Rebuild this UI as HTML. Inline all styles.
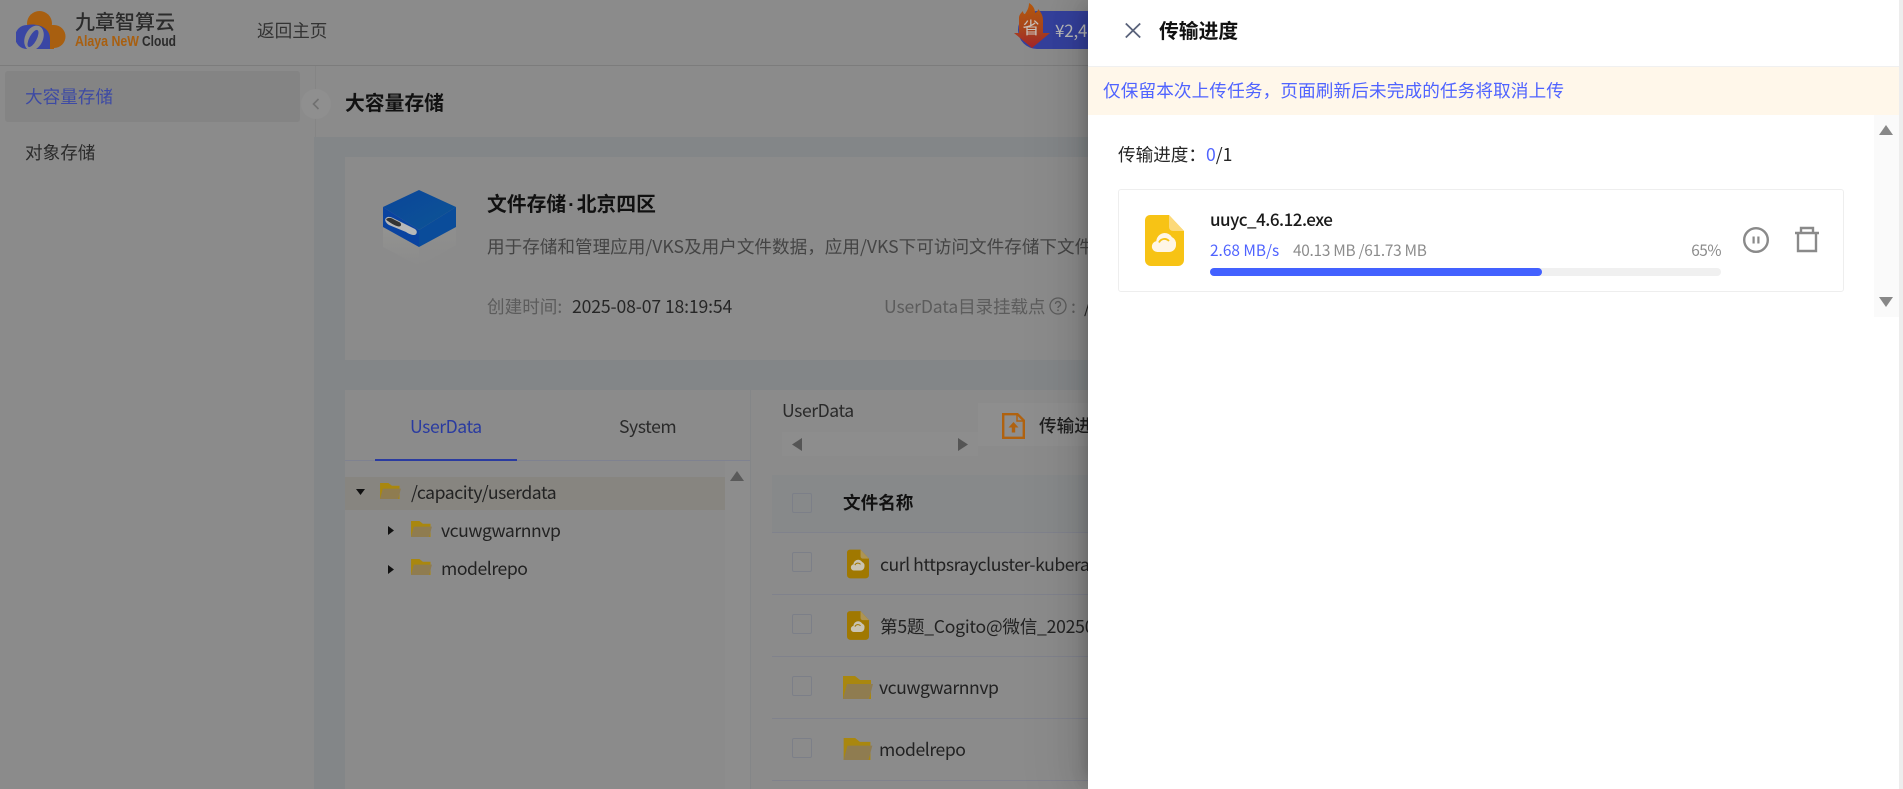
<!DOCTYPE html>
<html lang="zh">
<head>
<meta charset="utf-8">
<title>传输进度</title>
<style>
html,body{margin:0;padding:0;width:1903px;height:789px;overflow:hidden;background:#8b8b8b}
body{position:relative;font-family:"Noto Sans CJK SC","Liberation Sans",sans-serif;color:#262626}
.a{position:absolute}
.t{position:absolute;white-space:nowrap;font-size:17.6px;line-height:24px;height:24px}
.l{letter-spacing:-.45px}
.b{font-weight:700}
.cb{position:absolute;left:792px;width:18px;height:18px;border:1px solid #7c7f88;border-radius:2px;background:#8b8b8b}
.ln{position:absolute;height:1px}
svg{position:absolute;display:block;overflow:visible}
#panel{position:absolute;left:1088px;top:0;width:815px;height:789px;background:#fff;box-shadow:-6px 0 16px -8px rgba(0,0,0,.25),-9px 0 28px 0 rgba(0,0,0,.1),-12px 0 48px 16px rgba(0,0,0,.05);overflow:hidden}
</style>
</head>
<body>
<!-- header -->
<div class="ln" style="left:0;top:65px;width:1088px;background:#7c7c7c"></div>
<svg style="left:16px;top:11px;overflow:hidden" width="52" height="38" viewBox="0 0 52 38">
  <circle cx="23.500" cy="12.500" r="12.500" fill="#a85f10"/>
  <circle cx="38" cy="25.500" r="11.500" fill="#a85f10"/>
  <path d="M12 14h26v24H12z" fill="#a85f10"/>
  <circle cx="11" cy="26" r="12" fill="#3a46a4"/>
  <path d="M11 14c10-2 23 2 23 14v10H11z" fill="#3a46a4"/>
  <ellipse cx="18" cy="27" rx="9" ry="13" transform="rotate(24 18 27)" fill="#8b8b8b"/>
  <ellipse cx="17" cy="27.500" rx="3.600" ry="9.500" transform="rotate(28 17 27.500)" fill="#3a46a4"/>
</svg>
<div class="t" style="left:75px;top:9px;font-size:20px;font-weight:500;color:#2b2b2b;letter-spacing:0">九章智算云</div>
<svg style="left:75px;top:32px" width="101" height="18" viewBox="0 0 101 18">
  <text x="0" y="14" font-family="Liberation Sans" font-weight="700" font-size="15" fill="#a85f10" textLength="64" lengthAdjust="spacingAndGlyphs">Alaya NeW</text>
  <text x="67" y="14" font-family="Liberation Sans" font-weight="700" font-size="15" fill="#2b2b2b" textLength="34" lengthAdjust="spacingAndGlyphs">Cloud</text>
</svg>
<div class="t" style="left:257px;top:19px;color:#333">返回主页</div>

<!-- badge -->
<div class="a" style="left:1018px;top:11px;width:90px;height:38px;border-radius:19px 0 0 19px;background:#34409c"></div>
<div class="t" style="left:1055px;top:18px;color:#b9b9b9;font-size:17px;letter-spacing:-.2px">¥2,4</div>
<svg style="left:1014px;top:3px" width="36" height="46" viewBox="0 0 36 46">
  <defs><linearGradient id="fl" x1="0" y1="0" x2="0" y2="1"><stop offset="0" stop-color="#b5590c"/><stop offset=".55" stop-color="#a8461c"/><stop offset="1" stop-color="#a32529"/></linearGradient></defs>
  <path d="M15 0c5 3 6 7 6 10 2-1 3-2 3-4 3 3 5 7 5 11v13h7L18 45 0 30h5V15c0-3 2-5 4-7 0 2 1 3 2 3 2-3 4-6 4-11z" fill="url(#fl)"/>
  <text x="17" y="31" text-anchor="middle" font-family="Noto Sans CJK SC" font-size="17" fill="#c9c2bc">省</text>
</svg>

<!-- sidebar -->
<div class="a" style="left:315px;top:66px;width:1px;height:71px;background:#858585"></div>
<div class="a" style="left:5px;top:71px;width:295px;height:51px;background:#848484;border-radius:3px"></div>
<div class="t" style="left:25px;top:85px;color:#3d4aa4">大容量存储</div>
<div class="t" style="left:25px;top:141px;color:#2a2a2a">对象存储</div>
<div class="a" style="left:301px;top:89px;width:30px;height:30px;border-radius:50%;background:#8f8f8f"></div>
<svg style="left:312px;top:98px" width="8" height="12" viewBox="0 0 8 12"><path d="M6.500 1 1.500 6l5 5" fill="none" stroke="#707070" stroke-width="1.600"/></svg>

<!-- page title -->
<div class="t b" style="left:345px;top:90px;font-size:19.8px;color:#111">大容量存储</div>

<!-- band -->
<div class="a" style="left:314px;top:137px;width:774px;height:652px;background:#838688"></div>
<div class="a" style="left:345px;top:157px;width:743px;height:203px;background:#8b8b8b"></div>
<div class="a" style="left:345px;top:390px;width:743px;height:399px;background:#8b8b8b"></div>

<!-- storage box -->
<svg style="left:383px;top:190px" width="73" height="76" viewBox="0 0 73 76">
  <defs>
    <linearGradient id="g1" x1="0" y1="0" x2="1" y2="1"><stop offset="0" stop-color="#0a459a"/><stop offset="1" stop-color="#0d5595"/></linearGradient>
    <linearGradient id="g2" x1="0" y1="0" x2="0" y2="1"><stop offset="0" stop-color="#939391"/><stop offset="1" stop-color="#8b8b8b"/></linearGradient>
    <linearGradient id="g3" x1="0" y1="0" x2="0" y2="1"><stop offset="0" stop-color="#8f8f8e"/><stop offset="1" stop-color="#8b8b8b"/></linearGradient>
  </defs>
  <path d="M0 35v22l36 19V55z" fill="url(#g2)"/>
  <path d="M73 35v20L36 76V55z" fill="url(#g3)"/>
  <path d="M36 0 73 17 36 40 0 17z" fill="url(#g1)"/>
  <path d="M0 17 36 40V57L0 37z" fill="#0a43a0"/>
  <path d="M73 17 36 40V57L73 37z" fill="#0a4c9a"/>
  <path d="M3 28c2-2 5-1 7 0l22 11c3 2 2 6-1 6-2 0-5-1-8-3L6 35c-3-2-5-5-3-7z" fill="#b8b8b8"/>
  <path d="M4 28.500c2-1 4-1 7 1l6 3c2 2 1 4-1 4-2 0-6-2-9-4-3-2-5-3-3-4z" fill="#333"/>
</svg>

<div class="t b" style="left:487px;top:191px;font-size:19.8px;color:#111">文件存储<span style="font-family:'Liberation Sans';margin:0 2px">·</span>北京四区</div>
<div class="t" style="left:487px;top:235px;color:#444">用于存储和管理应用/VKS及用户文件数据，应用/VKS下可访问文件存储下文件</div>
<div class="t" style="left:487px;top:295px;color:#5c5c5c">创建时间:</div>
<div class="t" style="left:572px;top:295px;color:#262626;letter-spacing:-.13px">2025-08-07 18:19:54</div>
<div class="t" style="left:884px;top:295px;color:#5c5c5c;letter-spacing:-.15px">UserData目录挂载点</div>
<svg style="left:1049px;top:297px" width="18" height="18" viewBox="0 0 18 18">
  <circle cx="9" cy="9" r="8" fill="none" stroke="#5c5c5c" stroke-width="1.300"/>
  <path d="M6.500 7a2.500 2.500 0 1 1 3.600 2.300c-.8.400-1.100.8-1.100 1.700" fill="none" stroke="#5c5c5c" stroke-width="1.300"/>
  <circle cx="9" cy="13.300" r=".9" fill="#5c5c5c"/>
</svg>
<div class="t" style="left:1071px;top:295px;color:#5c5c5c">:</div>
<div class="t" style="left:1084px;top:295px;color:#262626">/</div>

<!-- tabs / tree -->
<div class="a" style="left:750px;top:390px;width:1px;height:399px;background:#848688"></div>
<div class="t l" style="left:410px;top:415px;color:#2a3ba0">UserData</div>
<div class="t l" style="left:619px;top:415px;color:#2a2a2a">System</div>
<div class="ln" style="left:345px;top:460px;width:405px;background:#7f8290"></div>
<div class="a" style="left:375px;top:459px;width:142px;height:2px;background:#2a3ba0"></div>
<div class="a" style="left:725px;top:461px;width:25px;height:328px;background:#8d8d8d"></div>
<div class="a" style="left:345px;top:477px;width:380px;height:33px;background:#878580"></div>
<svg style="left:730px;top:471px" width="14" height="10" viewBox="0 0 14 10"><path d="M7 0 14 10H0z" fill="#5a5a5a"/></svg>

<svg style="left:356px;top:489px" width="9" height="6" viewBox="0 0 9 6"><path d="M0 0h9L4.500 6z" fill="#111"/></svg>
<svg style="left:380px;top:483px" width="21" height="16" viewBox="0 0 30 23"><path d="M0 0h12l5 4h11v19H0z" fill="#a9870f"/><path d="M4 8h26l-4 15H0z" fill="#8f7c50"/></svg>
<div class="t l" style="left:411px;top:481px;color:#222">/capacity/userdata</div>

<svg style="left:388px;top:526px" width="6" height="9" viewBox="0 0 6 9"><path d="M0 0l6 4.500L0 9z" fill="#111"/></svg>
<svg style="left:411px;top:521px" width="21" height="16" viewBox="0 0 30 23"><path d="M0 0h12l5 4h11v19H0z" fill="#a9870f"/><path d="M4 8h26l-4 15H0z" fill="#8f7c50"/></svg>
<div class="t l" style="left:441px;top:519px;color:#222">vcuwgwarnnvp</div>

<svg style="left:388px;top:565px" width="6" height="9" viewBox="0 0 6 9"><path d="M0 0l6 4.500L0 9z" fill="#111"/></svg>
<svg style="left:411px;top:559px" width="21" height="16" viewBox="0 0 30 23"><path d="M0 0h12l5 4h11v19H0z" fill="#a9870f"/><path d="M4 8h26l-4 15H0z" fill="#8f7c50"/></svg>
<div class="t l" style="left:441px;top:557px;color:#222">modelrepo</div>

<!-- right column -->
<div class="t l" style="left:782px;top:399px;color:#2a2a2a">UserData</div>
<div class="a" style="left:782px;top:432px;width:196px;height:24px;background:#8d8d8d"></div>
<svg style="left:792px;top:438px" width="10" height="13" viewBox="0 0 10 13"><path d="M10 0v13L0 6.500z" fill="#555"/></svg>
<svg style="left:958px;top:438px" width="10" height="13" viewBox="0 0 10 13"><path d="M0 0v13l10-6.500z" fill="#555"/></svg>
<div class="a" style="left:978px;top:403px;width:110px;height:43px;background:#8e8e8e"></div>
<svg style="left:1002px;top:413px" width="23" height="26" viewBox="0 0 23 26">
  <path d="M1.200 1.200h14.300l6.300 6.300v17.300H1.200z" fill="none" stroke="#b0620f" stroke-width="2.400"/>
  <path d="M15 1v7h7" fill="none" stroke="#b0620f" stroke-width="1.500"/>
  <path d="M11.500 9 16.500 14.500h-3.300v5h-3.400v-5H6.500z" fill="#b0620f"/>
</svg>
<div class="t" style="left:1039px;top:414px;font-weight:500;color:#1e1e1e">传输进度</div>

<div class="a" style="left:772px;top:475px;width:316px;height:57px;background:#87898a"></div>
<div class="ln" style="left:772px;top:532px;width:316px;background:#80828c"></div>
<div class="ln" style="left:772px;top:594px;width:316px;background:#80828c"></div>
<div class="ln" style="left:772px;top:656px;width:316px;background:#80828c"></div>
<div class="ln" style="left:772px;top:718px;width:316px;background:#80828c"></div>
<div class="ln" style="left:772px;top:780px;width:316px;background:#80828c"></div>
<div class="cb" style="top:493px;background:#87898a"></div>
<div class="cb" style="top:552px"></div>
<div class="cb" style="top:614px"></div>
<div class="cb" style="top:676px"></div>
<div class="cb" style="top:738px"></div>
<div class="t b" style="left:843px;top:491px;color:#111">文件名称</div>

<svg style="left:847px;top:549px" width="22" height="30" viewBox="0 0 39 51">
  <path d="M5 0H24L39 16V45a6 6 0 0 1-6 6H6a6 6 0 0 1-6-6V5a5 5 0 0 1 5-5z" fill="#a07800"/>
  <path d="M24 0 39 16H28a4 4 0 0 1-4-4z" fill="#ad9454"/>
  <path d="M12.500 37a5.500 5.500 0 0 1-1.200-10.900A8.700 8.700 0 0 1 19.500 18a8.700 8.700 0 0 1 7.300 4A7.600 7.600 0 0 1 31 30a7 7 0 0 1-7 7z" fill="#c9c3b2"/>
  <path d="M14 27.500a6 6 0 0 1 10-1.500" stroke="#a07800" stroke-width="1.800" fill="none"/>
</svg>
<div class="t l" style="left:880px;top:553px;color:#222">curl httpsraycluster-kuberay</div>
<svg style="left:847px;top:610px" width="22" height="31" viewBox="0 0 39 51">
  <path d="M5 0H24L39 16V45a6 6 0 0 1-6 6H6a6 6 0 0 1-6-6V5a5 5 0 0 1 5-5z" fill="#a07800"/>
  <path d="M24 0 39 16H28a4 4 0 0 1-4-4z" fill="#ad9454"/>
  <path d="M12.500 37a5.500 5.500 0 0 1-1.200-10.900A8.700 8.700 0 0 1 19.500 18a8.700 8.700 0 0 1 7.300 4A7.600 7.600 0 0 1 31 30a7 7 0 0 1-7 7z" fill="#c9c3b2"/>
  <path d="M14 27.500a6 6 0 0 1 10-1.500" stroke="#a07800" stroke-width="1.800" fill="none"/>
</svg>
<div class="t" style="left:880px;top:615px;color:#222;letter-spacing:-.25px">第5题_Cogito@微信_20250</div>
<svg style="left:843px;top:676px" width="30" height="23" viewBox="0 0 30 23"><path d="M0 0h12l5 4h11v19H0z" fill="#a9870f"/><path d="M4 8h26l-4 15H0z" fill="#8f7c50"/></svg>
<div class="t l" style="left:879px;top:676px;color:#222">vcuwgwarnnvp</div>
<svg style="left:843px;top:738px" width="30" height="22" viewBox="0 0 30 23"><path d="M0 0h12l5 4h11v19H0z" fill="#a9870f"/><path d="M4 8h26l-4 15H0z" fill="#8f7c50"/></svg>
<div class="t l" style="left:879px;top:738px;color:#222">modelrepo</div>

<!-- drawer panel -->
<div id="panel">
  <svg style="left:37px;top:23px" width="16" height="15" viewBox="0 0 16 15"><path d="M.8.500 15.200 14.500M15.200.500.800 14.500" stroke="#59627a" stroke-width="1.800" fill="none"/></svg>
  <div class="t b" style="left:71px;top:18px;font-size:19.8px;color:#111">传输进度</div>
  <div class="ln" style="left:0;top:66px;width:811px;background:#f0f0f0"></div>
  <div class="a" style="left:0;top:67px;width:811px;height:48px;background:#fff7ea"></div>
  <div class="t" style="left:15px;top:79px;color:#4f63ff;letter-spacing:.14px">仅保留本次上传任务，页面刷新后未完成的任务将取消上传</div>
  <div class="a" style="left:786px;top:115px;width:25px;height:202px;background:#fafafa"></div>
  <svg style="left:791px;top:125px" width="14" height="10" viewBox="0 0 14 10"><path d="M7 0 14 10H0z" fill="#888"/></svg>
  <svg style="left:791px;top:297px" width="14" height="10" viewBox="0 0 14 10"><path d="M0 0h14L7 10z" fill="#888"/></svg>
  <div class="a" style="left:811px;top:0;width:4px;height:789px;background:#ededed"></div>

  <div class="t" style="left:30px;top:143px;color:#262626">传输进度：<span style="color:#4f63ff">0</span>/1</div>

  <div class="a" style="left:30px;top:189px;width:724px;height:101px;border:1px solid #eee;border-radius:3px;background:#fff"></div>
  <svg style="left:57px;top:215px" width="39" height="51" viewBox="0 0 39 51">
    <path d="M5 0H24L39 16V45a6 6 0 0 1-6 6H6a6 6 0 0 1-6-6V5a5 5 0 0 1 5-5z" fill="#f7c315"/>
    <path d="M24 0 39 16H28a4 4 0 0 1-4-4z" fill="#fcd97a"/>
    <path d="M12.500 37a5.500 5.500 0 0 1-1.200-10.900A8.700 8.700 0 0 1 19.500 18a8.700 8.700 0 0 1 7.300 4A7.600 7.600 0 0 1 31 30a7 7 0 0 1-7 7z" fill="#fff6e6"/>
    <path d="M14 27.500a6 6 0 0 1 10-1.500" stroke="#f7c315" stroke-width="1.800" fill="none"/>
  </svg>
  <div class="t" style="left:122px;top:207px;font-size:17px;font-weight:500;color:#1a1a1a;letter-spacing:-.5px">uuyc_4.6.12.exe</div>
  <div class="t" style="left:122px;top:238px;font-size:15.4px;color:#4f63ff">2.68 MB/s</div>
  <div class="t" style="left:205px;top:238px;font-size:15.4px;color:#8c8c8c;letter-spacing:-.27px">40.13 MB /61.73 MB</div>
  <div class="t" style="right:182px;top:238px;font-size:15.4px;color:#8c8c8c;letter-spacing:-.5px">65%</div>
  <div class="a" style="left:122px;top:268px;width:511px;height:8px;border-radius:4px;background:#f0f0f0"></div>
  <div class="a" style="left:122px;top:268px;width:332px;height:8px;border-radius:4px;background:#4361ff"></div>
  <svg style="left:655px;top:227px" width="26" height="26" viewBox="0 0 26 26">
    <circle cx="13" cy="13" r="11.800" fill="none" stroke="#8a8a8a" stroke-width="2.400"/>
    <rect x="9.500" y="9.500" width="2.200" height="7" fill="#8a8a8a"/><rect x="14.300" y="9.500" width="2.200" height="7" fill="#8a8a8a"/>
  </svg>
  <svg style="left:707px;top:227px" width="24" height="25" viewBox="0 0 24 25">
    <path d="M0 6h24M6 6V1h12v5M3 6v18h18V6" fill="none" stroke="#8a8a8a" stroke-width="2.400"/>
  </svg>
</div>
</body>
</html>
